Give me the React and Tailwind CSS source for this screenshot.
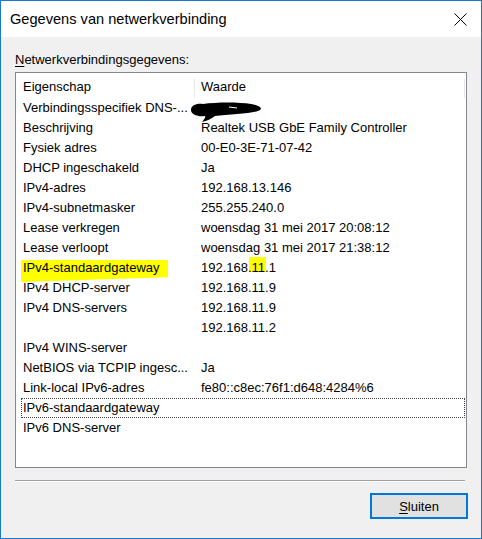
const rows = [
  ['Verbindingsspecifiek DNS-...', ''],
  ['Beschrijving', 'Realtek USB GbE Family Controller'],
  ['Fysiek adres', '00-E0-3E-71-07-42'],
  ['DHCP ingeschakeld', 'Ja'],
  ['IPv4-adres', '192.168.13.146'],
  ['IPv4-subnetmasker', '255.255.240.0'],
  ['Lease verkregen', 'woensdag 31 mei 2017 20:08:12'],
  ['Lease verloopt', 'woensdag 31 mei 2017 21:38:12'],
  ['IPv4-standaardgateway', '192.168.11.1'],
  ['IPv4 DHCP-server', '192.168.11.9'],
  ['IPv4 DNS-servers', '192.168.11.9'],
  ['', '192.168.11.2'],
  ['IPv4 WINS-server', ''],
  ['NetBIOS via TCPIP ingesc...', 'Ja'],
  ['Link-local IPv6-adres', 'fe80::c8ec:76f1:d648:4284%6'],
  ['IPv6-standaardgateway', ''],
  ['IPv6 DNS-server', ''],
];

// Hand-drawn marker blotting out the DNS suffix value.
function Scribble() {
  return (
    <svg className="absolute left-[167px] top-[3px]" width="74" height="21" viewBox="0 0 74 21">
      <path
        d="M2 8 C2 3 8 1 14 2 C28 0 50 0 62 2 C68 3 72 5 72 7 C70 10 60 11 48 12 C40 13 32 13 26 14 C22 17 18 19 13 20 C15 17 17 15 16 14 C10 15 2 13 2 8 Z"
        fill="#000"
      />
      <path d="M40 5 L48 6" stroke="#fff" strokeWidth="1" />
    </svg>
  );
}

export default function App() {
  return (
    <div
      className="w-[482px] h-[539px] border border-[#1979ca] bg-[#f0f0f0] flex flex-col text-black text-[13px]"
      style={{ fontFamily: '"Liberation Sans", Arial, sans-serif' }}
    >
      {/* Title bar */}
      <div className="h-[36px] bg-white flex items-center pl-[9px] pr-[14px] shrink-0">
        <span className="flex-1 text-[14.6px] leading-none pt-[1px]">Gegevens van netwerkverbinding</span>
        <svg width="13" height="13" viewBox="0 0 13 13">
          <path d="M0.5 0.5 L12.5 12.5 M12.5 0.5 L0.5 12.5" stroke="#000" strokeWidth="1" />
        </svg>
      </div>

      {/* Body */}
      <div className="flex-1 flex flex-col pl-[14px] pr-[13px] pt-[15px]">
        <p className="leading-[16px] h-[16px]">
          <span className="underline underline-offset-2">N</span>etwerkverbindingsgegevens:
        </p>

        <div className="mt-[4px] w-[452px] h-[396px] border border-[#828790] bg-white flex flex-col pr-[1px]">
          {/* Header */}
          <div className="h-[25px] flex shrink-0 pt-[6px]">
            <div className="w-[179px] pl-[7px] border-r border-[#e5e5e5] leading-[16px]">Eigenschap</div>
            <div className="flex-1 pl-[6px] border-r border-[#e5e5e5] leading-[16px]">Waarde</div>
          </div>

          {rows.map(([k, v], i) => (
            <div
              key={i}
              className={
                'relative h-[20px] flex items-center shrink-0 ml-[5px] ' +
                (i === 15 ? 'border border-dotted border-[#444]' : 'border border-transparent')
              }
            >
              {i === 8 && (
                <>
                  <div className="absolute left-[-1px] top-[1px] w-[147px] h-[22px] bg-[#ffff00] [clip-path:polygon(0_0,100%_0,100%_78%,0_100%)]" />
                  <div className="absolute left-[227px] top-[-2px] w-[17px] h-[15px] bg-[#ffff00]" />
                </>
              )}
              <div className="relative w-[179px] pl-[1px] pr-[6px] whitespace-nowrap overflow-hidden">{k}</div>
              <div className="relative flex-1 whitespace-nowrap">{v}</div>
              {i === 0 && <Scribble />}
            </div>
          ))}
        </div>

        <div className="mt-[12px] w-[450px] border-t border-[#a0a0a0] border-b border-b-white" />

        <div className="mt-[11px] flex justify-end">
          <button className="w-[98px] h-[26px] border-2 border-[#0078d7] bg-[#e1e1e1] text-[13px] leading-none">
            <span className="underline underline-offset-2">S</span>luiten
          </button>
        </div>
      </div>
    </div>
  );
}
